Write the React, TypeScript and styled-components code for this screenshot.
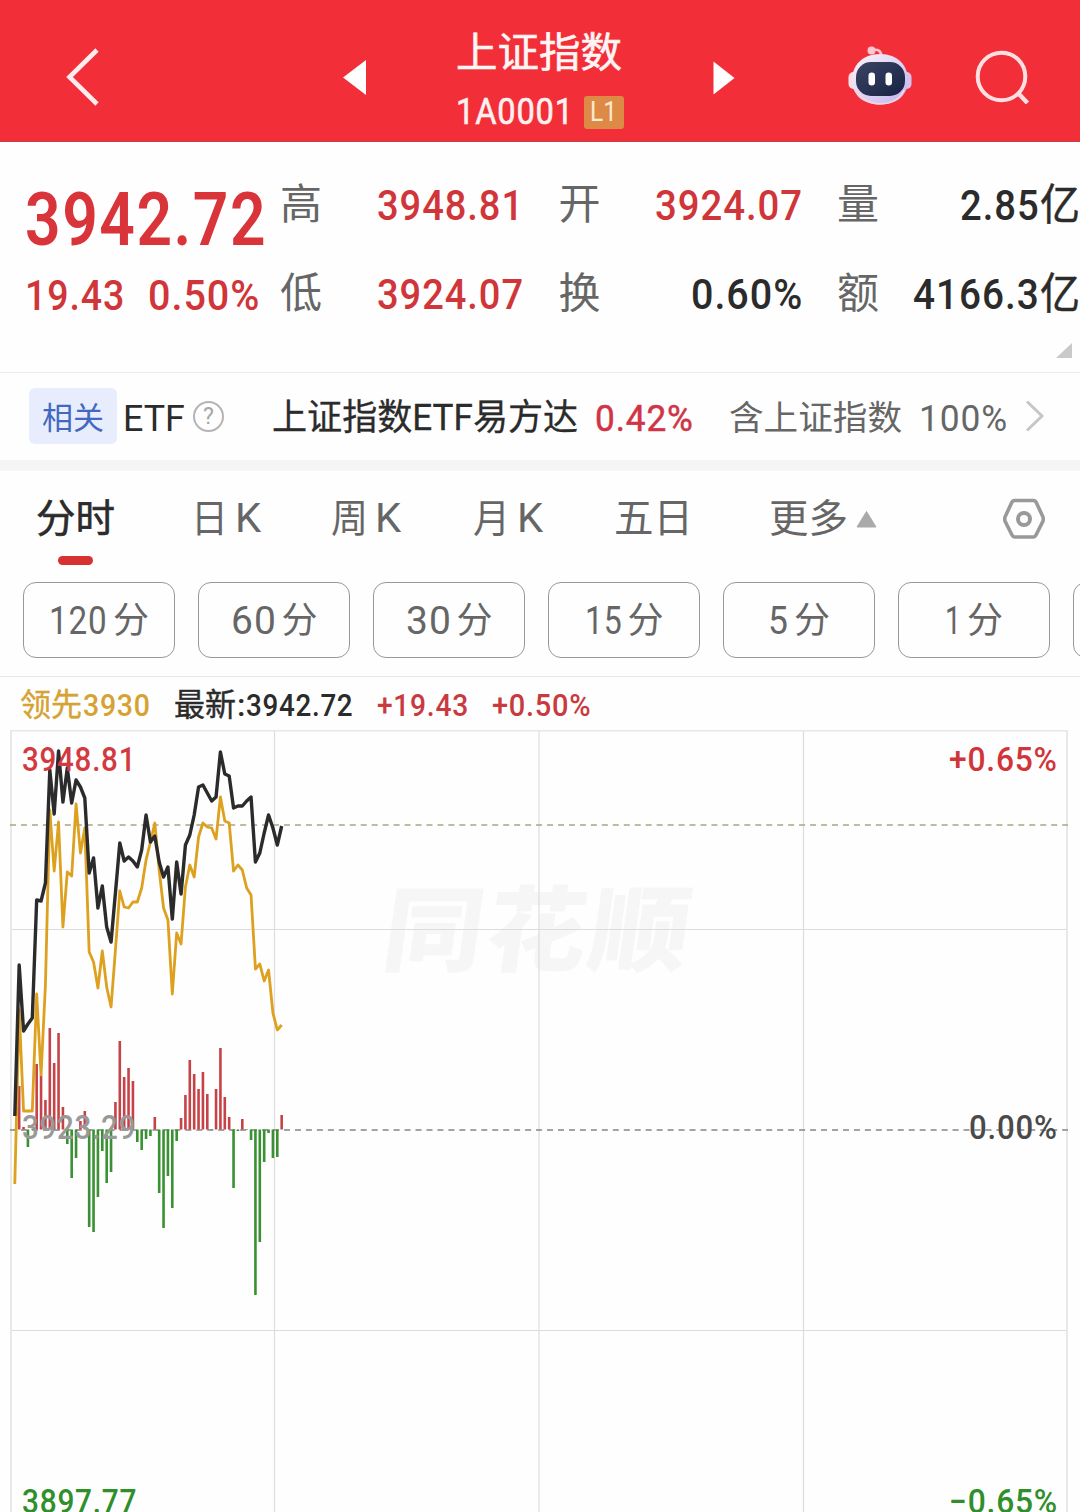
import React, { useLayoutEffect, useRef, useState } from 'react';
import styled, { createGlobalStyle } from 'styled-components';

const RED = '#d0353a';
const INK = '#2b2b2b';
const GRAY = '#666666';
const GREEN = '#2f8f2a';

const Global = createGlobalStyle`
  * { box-sizing: border-box; }
  html, body { margin: 0; padding: 0; }
  body {
    width: 1080px;
    height: 1512px;
    overflow: hidden;
    background: #fefefe;
    font-family: Roboto, 'Noto Sans CJK SC', sans-serif;
    color: ${INK};
  }
`;

/* Text condensed horizontally so that it fills an exact width. */
const FitBox = styled.span<{ $w: number; $size: number; $weight: number; $color: string; $stroke: number; $track: number }>`
  display: inline-block;
  flex: none;
  width: ${(p) => p.$w}px;
  height: ${(p) => Math.round(p.$size * 1.2)}px;
  line-height: ${(p) => Math.round(p.$size * 1.2)}px;
  font-size: ${(p) => p.$size}px;
  font-weight: ${(p) => p.$weight};
  letter-spacing: ${(p) => p.$track}px;
  color: ${(p) => p.$color};
  -webkit-text-stroke: ${(p) => p.$stroke}px ${(p) => p.$color};
  white-space: nowrap;
`;
const FitInner = styled.span`
  display: inline-block;
  transform-origin: 0 50%;
`;

type FitProps = {
  w: number;
  size: number;
  weight?: number;
  color?: string;
  stroke?: number;
  children: string;
};

function Fit({ w, size, weight = 500, color = INK, stroke = 0, children }: FitProps) {
  const ref = useRef<HTMLSpanElement>(null);
  const [scale, setScale] = useState(1);
  const track = /^[\d.%+−A]{2,}$/.test(children) ? size * 0.025 : 0;
  useLayoutEffect(() => {
    if (ref.current) setScale(w / (ref.current.offsetWidth - track));
  }, [w, size, track, children]);
  return (
    <FitBox $w={w} $size={size} $weight={weight} $color={color} $stroke={stroke} $track={track}>
      <FitInner ref={ref} style={{ transform: `scaleX(${scale})` }}>{children}</FitInner>
    </FitBox>
  );
}

const Screen = styled.main`
  width: 1080px;
  height: 1512px;
  overflow: hidden;
  display: flex;
  flex-direction: column;
`;

/* ---------- header ---------- */
const Header = styled.header`
  flex: none;
  height: 142px;
  display: grid;
  grid-template-columns: 277px 392px 1fr;
  align-items: center;
  padding: 12px 50px 0 66px;
  background: #f22f38;
  border-bottom: 1px solid #c9414c;
`;
const Switcher = styled.div`
  display: flex;
  align-items: center;
  justify-content: space-between;
  padding-top: 3px;
`;
const TitleBlock = styled.div`
  display: flex;
  flex-direction: column;
  width: 168px;
  margin-top: 8px;
`;
const TitleRow = styled.div<{ $h: number }>`
  display: flex;
  align-items: center;
  justify-content: space-between;
  height: ${(p) => p.$h}px;
`;
const Level = styled.span`
  width: 40px;
  height: 33px;
  border-radius: 3px;
  background: #dd8a46;
  display: flex;
  align-items: center;
  justify-content: center;
`;
const Actions = styled.div`
  display: flex;
  align-items: center;
  justify-content: flex-end;
  gap: 63px;
  padding-top: 1px;
`;

const Robot = () => (
  <svg width="64" height="62" viewBox="0 0 64 62">
    <defs>
      <linearGradient id="shell" x1="0" y1="0" x2="1" y2="1">
        <stop offset="0" stopColor="#fff3f6" />
        <stop offset="0.55" stopColor="#dcd3f4" />
        <stop offset="1" stopColor="#b9b4ee" />
      </linearGradient>
      <linearGradient id="visor" x1="0" y1="0" x2="1" y2="1">
        <stop offset="0" stopColor="#3c4463" />
        <stop offset="1" stopColor="#172244" />
      </linearGradient>
    </defs>
    <path d="M24 4.500 C30 2.500 33 5 33.500 10" fill="none" stroke="#fbc3cd" strokeWidth="2.600" />
    <circle cx="23.500" cy="4.500" r="4" fill="#fbc8d2" />
    <rect x="0.500" y="26" width="12" height="17" rx="5" fill="#fbdde6" />
    <rect x="51.500" y="26" width="12" height="17" rx="5" fill="#d5c3ee" />
    <path d="M32 8C50 8 60 20 60 34C60 49 49 58.500 32 58.500C15 58.500 4 49 4 34C4 20 14 8 32 8Z" fill="url(#shell)" />
    <path d="M8 44 C14 54 22 57.800 32 57.800 C43 57.800 52 53 56 44" fill="none" stroke="#f8d3df" strokeWidth="1.800" />
    <rect x="8" y="16" width="49" height="34" rx="15" fill="url(#visor)" />
    <rect x="20.500" y="26.500" width="6.500" height="13" rx="3.200" fill="#fff" />
    <rect x="37.500" y="26.500" width="6.500" height="13" rx="3.200" fill="#fff" />
  </svg>
);

/* ---------- quote ---------- */
const Quote = styled.section`
  flex: none;
  height: 231px;
  border-bottom: 1px solid #ebebeb;
`;
const QuoteMain = styled.div`
  display: flex;
  height: 201px;
  padding-left: 24px;
`;
const Price = styled.div`
  width: 256px;
  padding-top: 32px;
`;
const PriceRow = styled.div<{ $h: number }>`
  height: ${(p) => p.$h}px;
  display: flex;
  align-items: center;
  gap: 24px;
  padding-left: 1px;
`;
const Stats = styled.div`
  display: grid;
  grid-template-columns: repeat(3, 243px);
  grid-auto-rows: 89px;
  column-gap: 35.500px;
  padding-top: 18px;
`;
const Stat = styled.div`
  display: flex;
  align-items: center;
  justify-content: space-between;
`;
const Corner = styled.svg`
  display: block;
  margin-left: auto;
  margin-right: 8px;
`;

/* ---------- related ETF ---------- */
const Related = styled.section`
  flex: none;
  height: 98px;
  border-bottom: 11px solid #f5f5f5;
  display: flex;
  align-items: center;
  padding: 0 0 1px 29px;
`;
const Tag = styled.span`
  width: 88px;
  height: 56px;
  border-radius: 6px;
  background: #e8edfd;
  display: flex;
  align-items: center;
  justify-content: center;
`;
const Lowered = styled.span`
  display: flex;
  align-items: center;
  padding-top: 5px;
`;
const Space = styled.span<{ $w: number }>`
  flex: none;
  width: ${(p) => p.$w}px;
`;
const Help = styled.span`
  width: 31px;
  height: 31px;
  border: 2px solid #b4b4b4;
  border-radius: 50%;
  display: flex;
  align-items: center;
  justify-content: center;
  font-size: 23px;
  color: #a6a6a6;
`;

/* ---------- tabs ---------- */
const Tabs = styled.nav`
  flex: none;
  height: 111px;
  display: flex;
  align-items: flex-start;
  padding: 23px 0 0 36px;
`;
const Tab = styled.div<{ $w: number }>`
  width: ${(p) => p.$w}px;
  height: 50px;
  display: flex;
  align-items: center;
  gap: 7px;
`;
const ActiveTab = styled.div`
  width: 155px;
`;
const Underline = styled.div`
  width: 35px;
  height: 9px;
  margin: 12px 0 0 22px;
  border-radius: 5px;
  background: #d73232;
`;

const Periods = styled.div`
  flex: none;
  height: 95px;
  display: flex;
  gap: 23px;
  padding-left: 23px;
  border-bottom: 1px solid #e6e6e6;
  overflow: hidden;
`;
const Period = styled.button`
  flex: none;
  width: 152px;
  height: 76px;
  padding: 3px 0 0;
  border: 1px solid #989898;
  border-radius: 13px;
  background: transparent;
  font-family: inherit;
  display: flex;
  align-items: center;
  justify-content: center;
  gap: 6px;
`;

const Legend = styled.div`
  flex: none;
  height: 53px;
  display: flex;
  align-items: center;
  padding: 3px 0 0 20px;
  gap: 24px;
`;
const Pair = styled.span`
  display: flex;
  gap: 1px;
`;

/* ---------- chart ---------- */
const ChartArea = styled.section`
  flex: none;
  position: relative;
  height: 782px;
`;
const Plot = styled.svg`
  display: block;
  position: relative;
`;
const AxisLabel = styled.div<{ $top: number; $side: 'left' | 'right' }>`
  position: absolute;
  top: ${(p) => p.$top}px;
  ${(p) => p.$side}: ${(p) => (p.$side === 'left' ? 22 : 23)}px;
  height: 40px;
  display: flex;
  align-items: center;
`;
const Watermark = styled.div`
  position: absolute;
  top: 134px;
  left: 385px;
  height: 120px;
  line-height: 120px;
  font-family: 'Noto Sans CJK SC', sans-serif;
  font-size: 100px;
  font-weight: 900;
  letter-spacing: 3px;
  color: #f6f6f6;
  transform: skewX(-8deg) scaleY(0.93);
  white-space: nowrap;
`;

const price = [
  1116, 965, 1031, 1024, 1018, 900, 901, 883, 770, 814, 751, 802, 768, 803, 780, 787, 798, 873, 858, 908, 886,
  927, 942, 893, 843, 861, 857, 861, 867, 850, 815, 842, 836, 862, 877, 867, 919, 862, 894, 845, 835, 815, 787,
  785, 793, 801, 797, 752, 774, 776, 808, 806, 806, 801, 797, 862, 853, 833, 815, 828, 845, 826,
];
const lead = [
  1184, 1010, 1111, 1111, 1111, 994, 1075, 985, 810, 871, 822, 927, 872, 876, 804, 853, 828, 952, 962, 988, 951,
  987, 1007, 950, 891, 907, 908, 902, 902, 888, 860, 842, 823, 870, 908, 920, 994, 933, 944, 887, 865, 877, 837,
  823, 827, 828, 839, 797, 821, 823, 871, 865, 870, 888, 895, 969, 964, 981, 970, 1013, 1030, 1025,
];
const bars = [
  1130, 1086, 1127, 1147, 1130, 1064, 1075, 1100, 1028, 1063, 1033, 1107, 1144, 1178, 1158, 1121, 1111, 1227,
  1232, 1197, 1151, 1183, 1172, 1102, 1041, 1077, 1068, 1081, 1142, 1150, 1139, 1136, 1117, 1193, 1228, 1176,
  1208, 1141, 1118, 1095, 1060, 1074, 1089, 1072, 1094, 1130, 1089, 1048, 1097, 1117, 1188, 1131, 1119, 1130,
  1140, 1295, 1242, 1162, 1133, 1158, 1157, 1115,
];
const ZERO = 1129.5;
const xAt = (i: number) => 14.8 + i * 4.375;
const toPoints = (ys: number[]) => ys.map((y, i) => `${xAt(i)},${y}`).join(' ');

const Chart = () => (
  <ChartArea>
    <Watermark>同花顺</Watermark>
    <Plot width="1080" height="782" viewBox="0 730 1080 782">
      <g stroke="#dcdcdc" strokeWidth="1.200">
        <path d="M274.500 730V1512M539 730V1512M803.500 730V1512M11 929.500H1067M11 1330.500H1067" />
      </g>
      <path d="M11 1512V730.500H1067V1512" fill="none" stroke="#e6e6e6" strokeWidth="1.800" />
      <path d="M10 825H1068" stroke="#aba57f" strokeWidth="1.600" strokeDasharray="6 4.960" />
      <path d="M10 1130H1068" stroke="#858585" strokeWidth="1.600" strokeDasharray="6 4.960" />
      {bars.map((y, i) => (
        <rect
          key={i}
          x={xAt(i) - 1.3}
          width={2.6}
          y={Math.min(y, ZERO)}
          height={Math.abs(y - ZERO)}
          fill={y < ZERO ? '#c54348' : '#3a9133'}
        />
      ))}
      <polyline points={toPoints(lead)} fill="none" stroke="#dda01f" strokeWidth="2.800" strokeLinejoin="round" />
      <polyline points={toPoints(price)} fill="none" stroke="#2b2b2b" strokeWidth="3.400" strokeLinejoin="round" />
    </Plot>
    <AxisLabel $top={10} $side="left"><Fit w={113} size={33} color="#d23a3f">3948.81</Fit></AxisLabel>
    <AxisLabel $top={10} $side="right"><Fit w={108} size={33} color={RED}>+0.65%</Fit></AxisLabel>
    <AxisLabel $top={378} $side="left"><Fit w={113} size={33} color="#999">3923.29</Fit></AxisLabel>
    <AxisLabel $top={378} $side="right"><Fit w={88} size={33} color="#4a4a4a">0.00%</Fit></AxisLabel>
    <AxisLabel $top={752} $side="left"><Fit w={114} size={33} color={GREEN}>3897.77</Fit></AxisLabel>
    <AxisLabel $top={752} $side="right"><Fit w={108} size={33} color={GREEN}>−0.65%</Fit></AxisLabel>
  </ChartArea>
);

type StatItem = { label: string; value: string; unit?: string; w: number; color: string };
const stats: StatItem[] = [
  { label: '高', value: '3948.81', w: 146, color: RED },
  { label: '开', value: '3924.07', w: 147, color: RED },
  { label: '量', value: '2.85', unit: '亿', w: 79, color: INK },
  { label: '低', value: '3924.07', w: 146, color: RED },
  { label: '换', value: '0.60%', w: 111, color: INK },
  { label: '额', value: '4166.3', unit: '亿', w: 126, color: INK },
];

const periods = [
  { n: '120', w: 58 },
  { n: '60', w: 45 },
  { n: '30', w: 45 },
  { n: '15', w: 37 },
  { n: '5', w: 20 },
  { n: '1', w: 16 },
];

const kTabs = [
  { name: '日', w: 140 },
  { name: '周', w: 142 },
  { name: '月', w: 141 },
];

export default function App() {
  return (
    <Screen>
      <Global />
      <Header>
        <svg width="34" height="58" viewBox="0 0 34 58">
          <path d="M31 2L3.500 29L31 56" fill="none" stroke="#ffecee" strokeWidth="4.600" />
        </svg>
        <Switcher>
          <svg width="23" height="36" viewBox="0 0 23 36"><path d="M23 0V35L0 17.500Z" fill="#fff" /></svg>
          <TitleBlock>
            <TitleRow $h={60}><Fit w={166} size={41} weight={400} color="#fff5f5" stroke={0.6}>上证指数</Fit></TitleRow>
            <TitleRow $h={58}>
              <Fit w={117} size={36} color="#fff0f0" weight={400} stroke={0.6}>1A0001</Fit>
              <Level><Fit w={27} size={28} weight={400} color="#fcebcf">L1</Fit></Level>
            </TitleRow>
          </TitleBlock>
          <svg width="22" height="34" viewBox="0 0 22 34"><path d="M0.500 0.500L21.500 17L0.500 33.500Z" fill="#fff" /></svg>
        </Switcher>
        <Actions>
          <Robot />
          <svg width="55" height="54" viewBox="0 0 55 54">
            <circle cx="26.500" cy="26.500" r="23.800" fill="none" stroke="#ffdfe2" strokeWidth="4" />
            <path d="M43 43L52.500 53" stroke="#ffdfe2" strokeWidth="4.400" />
          </svg>
        </Actions>
      </Header>

      <Quote>
        <QuoteMain>
          <Price>
            <PriceRow $h={90}><Fit w={241} size={75} weight={600} color="#d8343a">3942.72</Fit></PriceRow>
            <PriceRow $h={64}>
              <Fit w={99} size={42} color={RED}>19.43</Fit>
              <Fit w={111} size={42} color={RED}>0.50%</Fit>
            </PriceRow>
          </Price>
          <Stats>
            {stats.map((s) => (
              <Stat key={s.label + s.value}>
                <Fit w={42} size={42} weight={400} color={GRAY}>{s.label}</Fit>
                <Pair>
                  <Fit w={s.w} size={43} color={s.color}>{s.value}</Fit>
                  {s.unit && <Fit w={40} size={43} weight={400} stroke={0.5}>{s.unit}</Fit>}
                </Pair>
              </Stat>
            ))}
          </Stats>
        </QuoteMain>
        <Corner width="16" height="16" viewBox="0 0 16 16"><path d="M16 0V15H0Z" fill="#c9c9c9" /></Corner>
      </Quote>

      <Related>
        <Tag><Lowered><Fit w={62} size={31} weight={400} color="#4468c0">相关</Fit></Lowered></Tag>
        <Space $w={6} />
        <Lowered><Fit w={62} size={37} weight={400}>ETF</Fit></Lowered>
        <Space $w={8} />
        <Help>?</Help>
        <Space $w={48} />
        <Lowered>
          <Fit w={306} size={36} weight={400} stroke={0.3}>上证指数ETF易方达</Fit>
          <Space $w={17} />
          <Fit w={98} size={37} weight={400} stroke={0.5} color="#cf3546">0.42%</Fit>
          <Space $w={36} />
          <Fit w={173} size={34} weight={400} color={GRAY}>含上证指数</Fit>
          <Space $w={17} />
          <Fit w={88} size={37} weight={400} color={GRAY}>100%</Fit>
        </Lowered>
        <Space $w={18} />
        <svg width="20" height="32" viewBox="0 0 20 32">
          <path d="M2 1.500L17 16L2 30.500" fill="none" stroke="#c6c6c6" strokeWidth="3" />
        </svg>
      </Related>

      <Tabs>
        <ActiveTab>
          <Tab $w={155}><Fit w={79} size={39} weight={400} stroke={0.6}>分时</Fit></Tab>
          <Underline />
        </ActiveTab>
        {kTabs.map((t) => (
          <Tab key={t.name} $w={t.w}>
            <Fit w={37} size={39} weight={400} color={GRAY}>{t.name}</Fit>
            <Fit w={26} size={40} weight={400} color={GRAY}>K</Fit>
          </Tab>
        ))}
        <Tab $w={155}><Fit w={79} size={40} weight={400} color={GRAY}>五日</Fit></Tab>
        <Tab $w={233}>
          <Fit w={79} size={39} weight={400} color={GRAY}>更多</Fit>
          <svg width="22" height="17" viewBox="0 0 22 17"><path d="M11.500 0.500L21 16H2Z" fill="#aaa" stroke="#aaa" strokeLinejoin="round" /></svg>
        </Tab>
        <Tab $w={44}>
          <svg width="44" height="44" viewBox="0 0 44 44" fill="none" stroke="#999">
            <path d="M12.500 3.500H31.500Q33 3.500 34 5L41 20Q41.500 22 41 24L34 38Q33 40 31.500 40H12.500Q11 40 10 38L3 24Q2.500 22 3 20L10 5Q11 3.500 12.500 3.500Z" strokeWidth="3.600" />
            <circle cx="22" cy="22" r="6" strokeWidth="4" />
          </svg>
        </Tab>
      </Tabs>

      <Periods>
        {periods.map((p) => (
          <Period key={p.n}>
            <Fit w={p.w} size={39} weight={400} color={GRAY}>{p.n}</Fit>
            <Fit w={36} size={36} weight={400} color={GRAY}>分</Fit>
          </Period>
        ))}
        <Period aria-hidden="true" />
      </Periods>

      <Legend>
        <Pair>
          <Fit w={62} size={32} weight={400} stroke={0.4} color="#d5a233">领先</Fit>
          <Fit w={67} size={32} color="#d5a233">3930</Fit>
        </Pair>
        <Pair>
          <Fit w={62} size={32} weight={400} stroke={0.4}>最新</Fit>
          <Fit w={8} size={32}>:</Fit>
          <Fit w={107} size={32}>3942.72</Fit>
        </Pair>
        <Fit w={91} size={32} color="#c93a40">+19.43</Fit>
        <Fit w={99} size={32} color="#c93a40">+0.50%</Fit>
      </Legend>

      <Chart />
    </Screen>
  );
}
